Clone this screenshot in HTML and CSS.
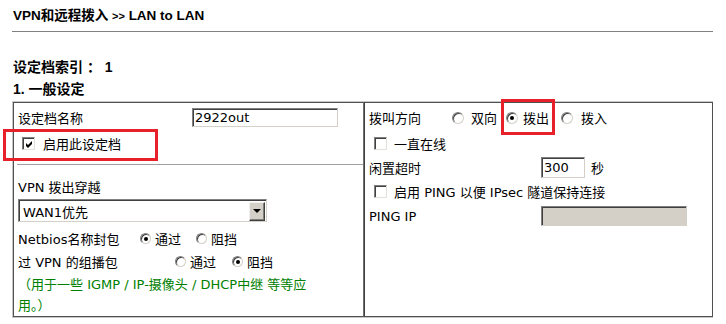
FILE: index.html
```html
<!DOCTYPE html>
<html lang="zh-CN">
<head>
<meta charset="utf-8">
<title>LAN to LAN</title>
<link rel="stylesheet" href="styles.css">
</head>
<body>
<div class="page">
  <div class="title">VPN和远程拨入 <span class="gt">&gt;&gt;</span> LAN to LAN</div>
  <div class="rule"></div>
  <div class="idx">设定档索引 ： 1</div>
  <div class="sec">1. 一般设定</div>
  <div class="panel">
    <div class="cell left">
      <div class="row r-name">
        <span class="lbl lbl-name">设定档名称</span>
        <span class="tbox tbox-name">2922out</span>
      </div>
      <div class="row r-enable">
        <span class="cb cb-on"><svg width="7" height="7" viewBox="0 0 7 7"><path d="M0 2 L2 4 L6 0 L6 3 L2 7 L0 5 Z" fill="#000"/></svg></span>
        <span class="cb-text">启用此设定档</span>
      </div>
      <div class="sep"></div>
      <div class="row r-vpn">VPN 拨出穿越</div>
      <div class="select">
        <span class="select-text">WAN1优先</span>
        <span class="select-btn"><span class="arrow"></span></span>
      </div>
      <div class="row r-opt">
        <span class="lbl lbl-netbios">Netbios名称封包</span>
        <span class="radio sm on"></span><span class="opt-text t-a">通过</span>
        <span class="radio sm r-gap-a"></span><span class="opt-text t-a">阻挡</span>
      </div>
      <div class="row r-opt">
        <span class="lbl lbl-mcast">过 VPN 的组播包</span>
        <span class="radio sm"></span><span class="opt-text t-a">通过</span>
        <span class="radio sm on r-gap-b"></span><span class="opt-text t-a">阻挡</span>
      </div>
      <div class="note">（用于一些 IGMP / IP-摄像头 / DHCP中继 等等应<br>用。）</div>
    </div>
    <div class="cell right">
      <div class="row r-dir">
        <span class="lbl lbl-dir">拨叫方向</span>
        <span class="radio"></span><span class="opt-text d1">双向</span>
        <span class="radio on d2r"></span><span class="opt-text d2">拨出</span>
        <span class="radio d3r"></span><span class="opt-text d3">拨入</span>
      </div>
      <div class="row r-cb">
        <span class="cb cb-r"></span><span class="cb-text cb-text-r">一直在线</span>
      </div>
      <div class="row r-idle">
        <span class="lbl lbl-r">闲置超时</span>
        <span class="tbox tbox-idle">300</span>
        <span class="unit">秒</span>
      </div>
      <div class="row r-cb2">
        <span class="cb cb-r"></span><span class="cb-text cb-text-r">启用 PING 以便 IPsec 隧道保持连接</span>
      </div>
      <div class="row r-ping">
        <span class="lbl lbl-r">PING IP</span>
        <span class="tbox tbox-ping"></span>
      </div>
    </div>
  </div>
  <div class="mark mark-a"></div>
  <div class="mark mark-b"></div>
</div>
</body>
</html>
```

FILE: styles.css
```css
* { box-sizing: border-box; }
html, body { margin: 0; padding: 0; background: #fff; }
body {
  font-family: "DejaVu Sans", "Noto Sans CJK SC", sans-serif;
  font-size: 13px;
  color: #000;
}
.page {
  position: relative;
  width: 726px;
  height: 324px;
  padding-left: 12px;
}
.title {
  padding-top: 8px;
  padding-left: 1px;
  height: 24px;
  line-height: 16px;
  font-family: "Liberation Sans", "Noto Sans CJK SC", sans-serif;
  font-weight: bold;
  font-size: 13.5px;
}
.title .gt { font-size: 11px; }
.rule {
  margin-top: 7px;
  width: 701px;
  height: 1px;
  background: #808080;
}
.idx, .sec {
  font-family: "Liberation Sans", "Noto Sans CJK SC", sans-serif;
  font-weight: bold;
  font-size: 14px;
  line-height: 18px;
  padding-left: 1px;
}
.idx { margin-top: 26px; }
.sec { margin-top: 4px; }
.panel {
  margin-top: 3px;
  width: 701px;
  border: 1px solid #c8c8c8;
  display: grid;
  grid-template-columns: 351px 349px;
}
.cell {
  border: 1px solid #505050;
}
.left { border-right-color: #707070; }
.right { border-left-color: #404040; }
.row {
  display: flex;
  align-items: center;
  white-space: nowrap;
}
.lbl { flex: none; }
/* left column */
.left .row { padding-left: 4px; }
.r-name { height: 29px; }
.lbl-name { width: 174px; }
.tbox {
  display: inline-flex;
  align-items: center;
  background: #fff;
  border: 1px solid;
  border-color: #808080 #d4d0c8 #d4d0c8 #808080;
  box-shadow: inset 1px 1px 0 #404040;
  padding-left: 2px;
  font-family: "DejaVu Sans", sans-serif;
  font-size: 13px;
  flex: none;
}
.tbox-name { width: 146px; height: 19px; }
.left .r-enable { height: 23px; padding-left: 8px; }
.cb {
  flex: none;
  width: 13px;
  height: 13px;
  background: #fff;
  border: 1px solid;
  border-color: #808080 #e4e2dc #e4e2dc #808080;
  box-shadow: inset 1px 1px 0 #404040;
  display: inline-flex;
  align-items: center;
  justify-content: center;
}
.cb svg { display: block; margin-left: 1px; margin-top: 1px; }
.cb-text { margin-left: 8px; }
.sep {
  margin-top: 9px;
  margin-left: 3px;
  height: 1px;
  background: #a0a0a0;
}
.r-vpn { margin-top: 10px; height: 22px; }
.select {
  margin-top: 2px;
  margin-left: 4px;
  width: 249px;
  height: 23px;
  display: flex;
  align-items: center;
  border: 1px solid;
  border-color: #808080 #d4d0c8 #d4d0c8 #808080;
  box-shadow: inset 1px 1px 0 #404040;
  padding: 2px 1px 1px 2px;
}
.select-text { flex: 1; padding-left: 2px; }
.select-btn {
  flex: none;
  width: 16px;
  height: 19px;
  background: #d4d0c8;
  border: 1px solid;
  border-color: #f0f0f0 #404040 #404040 #f0f0f0;
  box-shadow: inset -1px -1px 0 #808080;
  display: flex;
  align-items: center;
  justify-content: center;
}
.arrow {
  width: 0;
  height: 0;
  border-left: 4px solid transparent;
  border-right: 4px solid transparent;
  border-top: 4px solid #000;
}
.r-opt { height: 23px; }
.select + .r-opt { margin-top: 5px; }
.lbl-netbios { width: 122px; }
.lbl-mcast { width: 157px; }
.radio {
  flex: none;
  width: 12px;
  height: 12px;
  border-radius: 50%;
  background: #fff;
  border: 1px solid;
  border-color: #808080 #d4d0c8 #d4d0c8 #808080;
  box-shadow: inset 1px 1px 0 #404040;
  position: relative;
}
.radio.sm { width: 11px; height: 11px; }
.radio.on::after {
  content: "";
  position: absolute;
  left: 50%;
  top: 50%;
  width: 4px;
  height: 4px;
  margin: -2px 0 0 -2px;
  border-radius: 50%;
  background: #000;
}
.t-a { margin-left: 4px; }
.r-gap-a { margin-left: 15px; }
.r-gap-b { margin-left: 16px; }
.note {
  margin-top: 1px;
  padding-left: 4px;
  color: #008000;
  line-height: 21px;
  white-space: nowrap;
}
/* right column */
.right .row { padding-left: 4px; }
.r-dir { height: 29px; }
.lbl-dir { width: 83px; }
.d1 { margin-left: 7px; }
.d2r { margin-left: 9px; }
.d2 { margin-left: 5px; }
.d3r { margin-left: 12px; }
.d3 { margin-left: 8px; }
.right .r-cb { height: 23px; padding-left: 9px; }
.right .r-cb2 { height: 24px; padding-left: 9px; }
.cb-text-r { margin-left: 7px; }
.r-idle { height: 24px; }
.lbl-r { width: 172px; }
.tbox-idle { width: 44px; height: 21px; }
.unit { margin-left: 6px; }
.r-ping { height: 26px; }
.tbox-ping {
  width: 146px;
  height: 20px;
  background: #d4d0c8;
  border-color: #808080 #d4d0c8 #d4d0c8 #808080;
}
/* annotation boxes */
.mark {
  position: absolute;
  border: 3px solid #e8202a;
}
.mark-a { left: 3px; top: 129px; width: 155px; height: 32px; }
.mark-b { left: 501px; top: 99px; width: 54px; height: 36px; }
```
